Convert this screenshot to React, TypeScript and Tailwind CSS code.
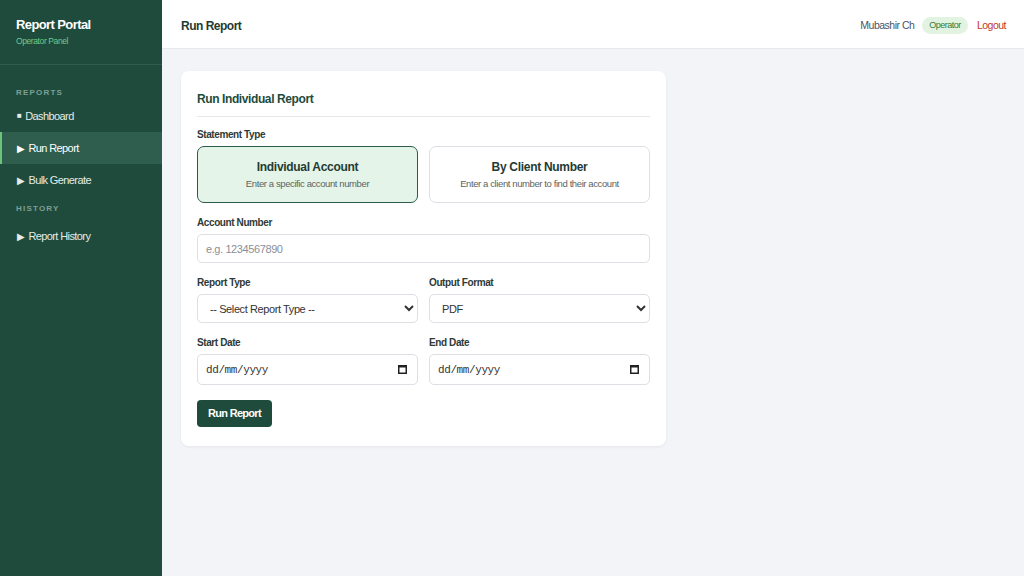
import { useState } from 'react';

type Mode = 'individual' | 'client';

const navGroups = [
  { section: 'Reports', headCls: 'mt-[21px] mb-0', items: [
    { label: 'Dashboard', icon: '■', active: false },
    { label: 'Run Report', icon: '▶', active: true },
    { label: 'Bulk Generate', icon: '▶', active: false },
  ] },
  { section: 'History', headCls: 'mt-[6px] mb-[4px]', items: [
    { label: 'Report History', icon: '▶', active: false },
  ] },
];

function Sidebar() {
  return (
    <aside className="w-[162px] shrink-0 bg-[#1e4b3c] text-white flex flex-col">
      <div className="px-4 pt-[17px] h-[65px] border-b border-[#2f5d4d]">
        <div className="text-[13px] font-bold tracking-[-0.6px] leading-[15px]">Report Portal</div>
        <div className="text-[8.5px] text-[#74c98a] mt-[3px] tracking-[-0.4px]">Operator Panel</div>
      </div>
      <nav>
        {navGroups.map((group) => (
          <div key={group.section}>
            <div className={`${group.headCls} px-4 text-[8px] uppercase tracking-[1.2px] text-[#7f9f92] font-bold h-[14px] leading-[14px]`}>
              {group.section}
            </div>
            {group.items.map((item) => (
              <div
                key={item.label}
                className={`flex items-center gap-[4px] h-[32px] text-[11px] tracking-[-0.6px] ${
                  item.active
                    ? 'bg-[#2f5e4e] border-l-2 border-[#6cc47c] pl-[15px] text-white'
                    : 'pl-[17px] text-[#e3ece8]'
                }`}
              >
                <span className={item.icon === '■' ? 'text-[8px]' : 'text-[10px]'}>{item.icon}</span>
                <span>{item.label}</span>
              </div>
            ))}
          </div>
        ))}
      </nav>
    </aside>
  );
}

function Header() {
  return (
    <header className="h-[49px] shrink-0 bg-white border-b border-[#e7e9ee] flex items-center justify-between pt-[3px] pl-[19px] pr-[18px]">
      <div className="text-[12px] font-bold text-[#1f3b33] tracking-[-0.5px]">Run Report</div>
      <div className="flex items-center gap-[8px] text-[10.5px] tracking-[-0.5px]">
        <span className="text-[#4b5563]">Mubashir Ch</span>
        <span className="bg-[#e3f3e2] text-[#2f7d3b] text-[9px] rounded-full px-[7px] py-[2px]">Operator</span>
        <span className="text-[#c0392b] ml-[1px]">Logout</span>
      </div>
    </header>
  );
}

function Label({ children }: { children: React.ReactNode }) {
  return (
    <div className="text-[10px] leading-[12px] font-bold text-[#2e3a36] tracking-[-0.4px] mb-[5px]">{children}</div>
  );
}

const fieldCls =
  'w-full bg-white border border-[#dcdfe4] rounded-[5px] px-[8px] text-[11px] text-[#333] tracking-[-0.4px] outline-none';

function CalendarIcon() {
  return (
    <svg width="9" height="10" viewBox="0 0 9 10" className="text-[#222]">
      <rect x="0.75" y="1.75" width="7.5" height="7.5" fill="none" stroke="currentColor" strokeWidth="1.5" />
      <rect x="0.75" y="1.5" width="7.5" height="2" fill="currentColor" />
    </svg>
  );
}

function DateField() {
  return (
    <div className="relative">
      <input
        type="text"
        className={`${fieldCls} h-[31px] font-['Liberation_Mono',monospace] text-[9.5px] tracking-[-0.3px] placeholder:text-[#333]`}
        placeholder="dd/mm/yyyy"
      />
      <span className="absolute right-[11px] top-[10px] pointer-events-none">
        <CalendarIcon />
      </span>
    </div>
  );
}

function ReportForm() {
  const [mode, setMode] = useState<Mode>('individual');

  const optionCls = (active: boolean) =>
    `flex-1 h-[57px] rounded-[7px] flex flex-col items-center justify-center border ${
      active ? 'bg-[#e5f4e8] border-[#2c5b4a]' : 'bg-white border-[#dcdfe4]'
    }`;

  return (
    <div className="w-[485px] bg-white rounded-[8px] shadow-[0_1px_3px_rgba(0,0,0,0.06)] px-4 pt-[19px] pb-[19px]">
      <div className="text-[12px] leading-[18px] font-bold text-[#1e4b3c] tracking-[-0.4px] pb-[8px] border-b border-[#e5e7eb]">
        Run Individual Report
      </div>

      <div className="mt-[12px]">
        <Label>Statement Type</Label>
        <div className="flex gap-[11px]">
          <button className={optionCls(mode === 'individual')} onClick={() => setMode('individual')}>
            <span className="text-[12px] font-bold text-[#233b33] tracking-[-0.3px]">Individual Account</span>
            <span className="text-[9.5px] text-[#5b6461] tracking-[-0.4px] mt-[1px]">Enter a specific account number</span>
          </button>
          <button className={optionCls(mode === 'client')} onClick={() => setMode('client')}>
            <span className="text-[12px] font-bold text-[#233b33] tracking-[-0.3px]">By Client Number</span>
            <span className="text-[9.5px] text-[#5b6461] tracking-[-0.4px] mt-[1px]">Enter a client number to find their account</span>
          </button>
        </div>
      </div>

      <div className="mt-[14px]">
        <Label>Account Number</Label>
        <input className={`${fieldCls} h-[29px] placeholder:text-[#8a8f95]`} placeholder="e.g. 1234567890" />
      </div>

      <div className="mt-[14px] grid grid-cols-2 gap-x-[11px]">
        <div>
          <Label>Report Type</Label>
          <select className={`${fieldCls} h-[29px]`} defaultValue="">
            <option value="">-- Select Report Type --</option>
          </select>
        </div>
        <div>
          <Label>Output Format</Label>
          <select className={`${fieldCls} h-[29px]`} defaultValue="pdf">
            <option value="pdf">PDF</option>
          </select>
        </div>
      </div>

      <div className="mt-[14px] grid grid-cols-2 gap-x-[11px]">
        <div>
          <Label>Start Date</Label>
          <DateField />
        </div>
        <div>
          <Label>End Date</Label>
          <DateField />
        </div>
      </div>

      <button className="mt-[15px] h-[27px] px-[11px] rounded-[4px] bg-[#1e4b3c] text-white text-[11px] font-bold tracking-[-0.7px]">
        Run Report
      </button>
    </div>
  );
}

export default function App() {
  return (
    <div className="w-[1024px] h-[576px] flex overflow-hidden font-['Liberation_Sans',Arial,sans-serif]">
      <Sidebar />
      <div className="flex-1 flex flex-col bg-[#f3f4f8]">
        <Header />
        <main className="flex-1 pl-[19px] pt-[22px]">
          <ReportForm />
        </main>
      </div>
    </div>
  );
}
